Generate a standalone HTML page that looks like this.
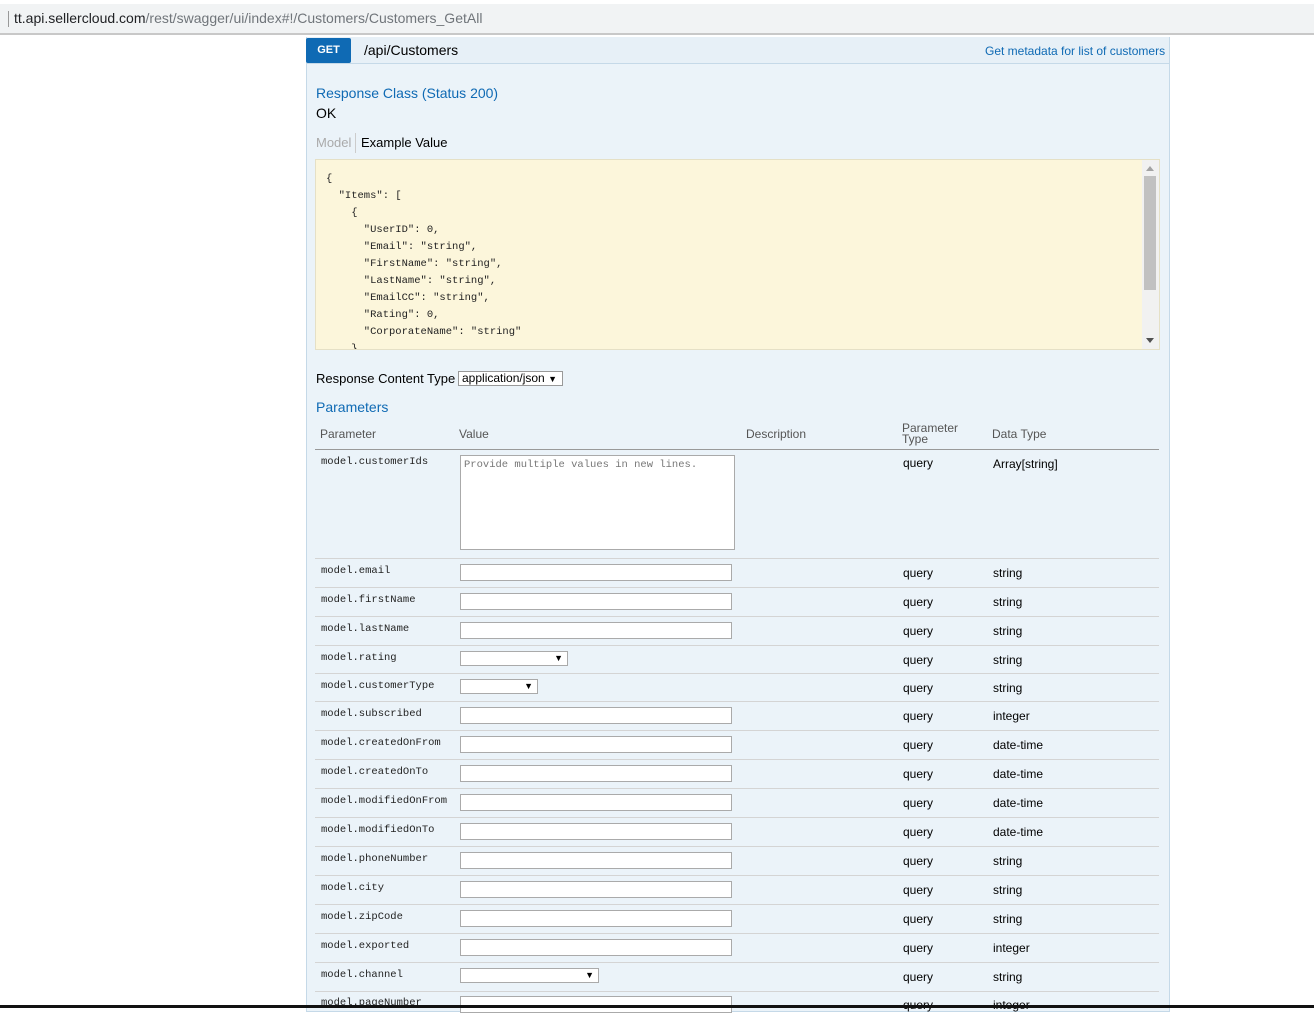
<!DOCTYPE html>
<html><head><meta charset="utf-8"><style>
*{margin:0;padding:0;box-sizing:border-box}
body{width:1314px;height:1008px;overflow:hidden;background:#fff;font-family:"Liberation Sans",Arial,sans-serif;position:relative}
.a{position:absolute;white-space:nowrap}
.bar{left:0;top:4px;width:1314px;height:31px;background:#f1f3f4;border-bottom:2px solid #c8c8c8}
.panel{left:306px;top:37px;width:864px;height:975px;background:#ebf3f9;border:1px solid #c5d9e8;border-top:none}
.mono{font-family:"Liberation Mono",monospace;font-size:10.5px;color:#222}
.lbl{font-size:12px;color:#000}
.inp{position:absolute;left:460px;height:17px;width:272px;background:#fff;border:1px solid #aaa}
.sel{position:absolute;left:460px;height:15px;background:#fff;border:1px solid #aaa;font-size:9px;text-align:right;padding-right:4px;line-height:13px}
.sep{position:absolute;left:315px;width:844px;height:1px;background:#d4d4d4}
</style></head><body>
<div class="a bar"></div>
<div class="a" style="left:8px;top:11px;width:1px;height:16px;background:#999"></div>
<div class="a" style="left:14px;top:10px;font-size:14px;color:#202124">tt.api.sellercloud.com<span style="color:#70757a">/rest/swagger/ui/index#!/Customers/Customers_GetAll</span></div>
<div class="a panel"></div>
<div class="a" style="left:307px;top:37px;width:862px;height:27px;background:#e7f0f7;border-bottom:1px solid #c5d9e8"></div>
<div class="a" style="left:306px;top:38px;width:45px;height:25px;background:#0f6ab4;border-radius:2px;color:#fff;font-size:11px;font-weight:bold;text-align:center;line-height:25px">GET</div>
<div class="a" style="left:364px;top:42px;font-size:14px;color:#000">/api/Customers</div>
<div class="a" style="left:985px;top:44px;font-size:12px;color:#0f6ab4">Get metadata for list of customers</div>
<div class="a" style="left:316px;top:85px;font-size:14px;color:#0f6ab4">Response Class (Status 200)</div>
<div class="a" style="left:316px;top:105px;font-size:14px;color:#000">OK</div>
<div class="a" style="left:316px;top:135px;font-size:13px;color:#aaa">Model</div>
<div class="a" style="left:355px;top:133px;width:1px;height:20px;background:#ccc"></div>
<div class="a" style="left:361px;top:135px;font-size:13px;color:#000">Example Value</div>
<div class="a" style="left:315px;top:159px;width:845px;height:191px;background:#fcf6db;border:1px solid #e5e0c6;overflow:hidden">
<pre class="mono" style="position:absolute;left:10px;top:11px;line-height:17px;font-family:'Liberation Mono',monospace">{
  "Items": [
    {
      "UserID": 0,
      "Email": "string",
      "FirstName": "string",
      "LastName": "string",
      "EmailCC": "string",
      "Rating": 0,
      "CorporateName": "string"
    }</pre>
<div style="position:absolute;right:0;top:0;width:17px;height:190px;background:#f1f1f1"></div>
<div style="position:absolute;right:3px;top:16px;width:12px;height:114px;background:#c1c1c1"></div>
<div style="position:absolute;right:5px;top:6px;width:0;height:0;border-left:4px solid transparent;border-right:4px solid transparent;border-bottom:5px solid #a3a3a3"></div>
<div style="position:absolute;right:5px;bottom:6px;width:0;height:0;border-left:4px solid transparent;border-right:4px solid transparent;border-top:5px solid #505050"></div>
</div>
<div class="a" style="left:316px;top:371px;font-size:13px;color:#000">Response Content Type</div>
<div class="a" style="left:458px;top:371px;width:105px;height:15px;background:#fff;border:1px solid #999;font-size:12px;line-height:13px;padding-left:3px">application/json <span style="font-size:9px">▼</span></div>
<div class="a" style="left:316px;top:399px;font-size:14px;color:#0f6ab4">Parameters</div>
<div class="a" style="left:320px;top:427px;font-size:12px;color:#555">Parameter</div>
<div class="a" style="left:459px;top:427px;font-size:12px;color:#555">Value</div>
<div class="a" style="left:746px;top:427px;font-size:12px;color:#555">Description</div>
<div class="a" style="left:902px;top:423px;font-size:12px;color:#555;line-height:11px">Parameter<br>Type</div>
<div class="a" style="left:992px;top:427px;font-size:12px;color:#555">Data Type</div>
<div class="sep" style="top:449px;background:#999"></div>
<div class="a mono" style="left:321px;top:456px">model.customerIds</div>
<div class="a" style="left:460px;top:455px;width:275px;height:95px;background:#fff;border:1px solid #aaa"><span class="mono" style="position:absolute;left:3px;top:3px;color:#777">Provide multiple values in new lines.</span></div>
<div class="a lbl" style="left:903px;top:456px">query</div>
<div class="a lbl" style="left:993px;top:457px">Array[string]</div>
<div class="sep" style="top:558px"></div>

<div class="a mono" style="left:321px;top:565px">model.email</div><div class="inp" style="top:564px"></div><div class="a lbl" style="left:903px;top:566px">query</div><div class="a lbl" style="left:993px;top:566px">string</div><div class="sep" style="top:587px"></div>
<div class="a mono" style="left:321px;top:594px">model.firstName</div><div class="inp" style="top:593px"></div><div class="a lbl" style="left:903px;top:595px">query</div><div class="a lbl" style="left:993px;top:595px">string</div><div class="sep" style="top:616px"></div>
<div class="a mono" style="left:321px;top:623px">model.lastName</div><div class="inp" style="top:622px"></div><div class="a lbl" style="left:903px;top:624px">query</div><div class="a lbl" style="left:993px;top:624px">string</div><div class="sep" style="top:645px"></div>
<div class="a mono" style="left:321px;top:652px">model.rating</div><div class="sel" style="top:651px;width:108px">▼</div><div class="a lbl" style="left:903px;top:653px">query</div><div class="a lbl" style="left:993px;top:653px">string</div><div class="sep" style="top:673px"></div>
<div class="a mono" style="left:321px;top:680px">model.customerType</div><div class="sel" style="top:679px;width:78px">▼</div><div class="a lbl" style="left:903px;top:681px">query</div><div class="a lbl" style="left:993px;top:681px">string</div><div class="sep" style="top:701px"></div>
<div class="a mono" style="left:321px;top:708px">model.subscribed</div><div class="inp" style="top:707px"></div><div class="a lbl" style="left:903px;top:709px">query</div><div class="a lbl" style="left:993px;top:709px">integer</div><div class="sep" style="top:730px"></div>
<div class="a mono" style="left:321px;top:737px">model.createdOnFrom</div><div class="inp" style="top:736px"></div><div class="a lbl" style="left:903px;top:738px">query</div><div class="a lbl" style="left:993px;top:738px">date-time</div><div class="sep" style="top:759px"></div>
<div class="a mono" style="left:321px;top:766px">model.createdOnTo</div><div class="inp" style="top:765px"></div><div class="a lbl" style="left:903px;top:767px">query</div><div class="a lbl" style="left:993px;top:767px">date-time</div><div class="sep" style="top:788px"></div>
<div class="a mono" style="left:321px;top:795px">model.modifiedOnFrom</div><div class="inp" style="top:794px"></div><div class="a lbl" style="left:903px;top:796px">query</div><div class="a lbl" style="left:993px;top:796px">date-time</div><div class="sep" style="top:817px"></div>
<div class="a mono" style="left:321px;top:824px">model.modifiedOnTo</div><div class="inp" style="top:823px"></div><div class="a lbl" style="left:903px;top:825px">query</div><div class="a lbl" style="left:993px;top:825px">date-time</div><div class="sep" style="top:846px"></div>
<div class="a mono" style="left:321px;top:853px">model.phoneNumber</div><div class="inp" style="top:852px"></div><div class="a lbl" style="left:903px;top:854px">query</div><div class="a lbl" style="left:993px;top:854px">string</div><div class="sep" style="top:875px"></div>
<div class="a mono" style="left:321px;top:882px">model.city</div><div class="inp" style="top:881px"></div><div class="a lbl" style="left:903px;top:883px">query</div><div class="a lbl" style="left:993px;top:883px">string</div><div class="sep" style="top:904px"></div>
<div class="a mono" style="left:321px;top:911px">model.zipCode</div><div class="inp" style="top:910px"></div><div class="a lbl" style="left:903px;top:912px">query</div><div class="a lbl" style="left:993px;top:912px">string</div><div class="sep" style="top:933px"></div>
<div class="a mono" style="left:321px;top:940px">model.exported</div><div class="inp" style="top:939px"></div><div class="a lbl" style="left:903px;top:941px">query</div><div class="a lbl" style="left:993px;top:941px">integer</div><div class="sep" style="top:962px"></div>
<div class="a mono" style="left:321px;top:969px">model.channel</div><div class="sel" style="top:968px;width:139px">▼</div><div class="a lbl" style="left:903px;top:970px">query</div><div class="a lbl" style="left:993px;top:970px">string</div><div class="sep" style="top:991px"></div>
<div class="a mono" style="left:321px;top:997px">model.pageNumber</div><div class="inp" style="top:996px"></div><div class="a lbl" style="left:903px;top:998px">query</div><div class="a lbl" style="left:993px;top:998px">integer</div>
<div class="a" style="left:0;top:1005px;width:1314px;height:3px;background:#111"></div>
</body></html>
